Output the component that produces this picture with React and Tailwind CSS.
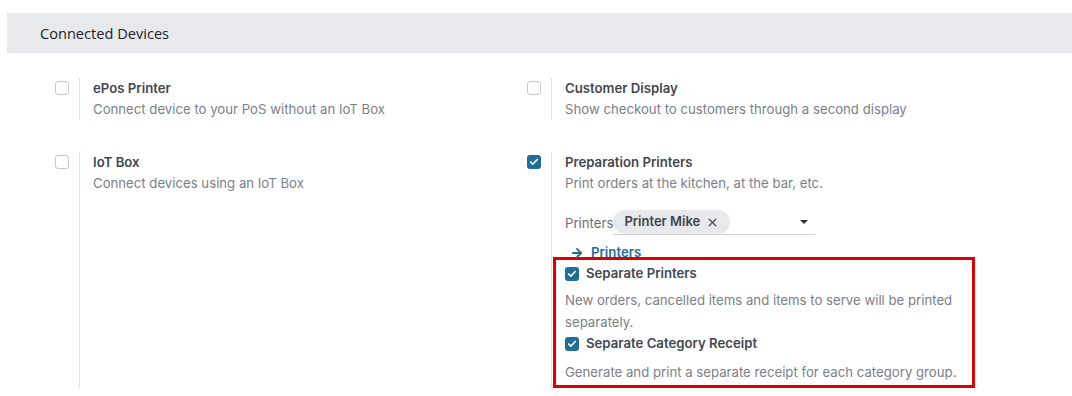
import React from 'react';
import { ArrowRight, Check, X } from 'lucide-react';

const Checkbox = ({ checked }) =>
  checked ? (
    <span className="flex items-center justify-center w-[14px] h-[14px] rounded-[3px] bg-[#1f6e99]">
      <Check size={10} strokeWidth={4} color="white" />
    </span>
  ) : (
    <span className="block w-[14px] h-[14px] rounded-[3px] border border-[#c4c8cd] bg-white" />
  );

const Setting = ({ title, desc, checked, children }) => (
  <div className="flex">
    <div className="w-[24px] shrink-0 pt-[3px]">
      <Checkbox checked={checked} />
    </div>
    <div className="border-l border-[#dee2e6] pl-[13px] flex-1">
      <div className="text-[13.2px] leading-[21px] font-semibold text-[#43484f]">{title}</div>
      <div className="text-[13.2px] leading-[21px] text-[#7b8088]">{desc}</div>
      {children}
    </div>
  </div>
);

export default function App() {
  return (
    <div className="w-[1072px] h-[396px] overflow-hidden bg-white font-['Inter',sans-serif]">
      <div className="mt-[13px] ml-[7px] h-10 bg-[#e7e9ed] flex items-center pl-[33px] pt-[1px]">
        <span className="text-[14.6px] font-medium text-[#1f2328] font-['Open_Sans',sans-serif]">Connected Devices</span>
      </div>

      <div className="grid grid-cols-[472px_1fr] pl-[55px] pt-[25px] gap-y-[32px]">
        <Setting title="ePos Printer" desc="Connect device to your PoS without an IoT Box" />
        <Setting title="Customer Display" desc="Show checkout to customers through a second display" />
        <Setting title="IoT Box" desc="Connect devices using an IoT Box" />
        <Setting title="Preparation Printers" desc="Print orders at the kitchen, at the bar, etc." checked>
          <div className="flex items-end mt-[16px] h-[25px]">
            <span className="text-[13.2px] text-[#6b7078] leading-[24px]">Printers</span>
            <div className="flex items-center justify-between w-[202px] h-[25px] border-b border-[#cfd3d7]">
              <span className="flex items-center gap-[6px] h-[24px] px-[11px] rounded-full bg-[#e7e9ed] text-[13px] font-semibold text-[#3f444b]">
                Printer Mike
                <X size={13} strokeWidth={2.5} className="text-[#555b62]" />
              </span>
              <span className="mr-[7px] w-0 h-0 border-l-[4px] border-r-[4px] border-t-[4px] border-l-transparent border-r-transparent border-t-[#333]" />
            </div>
          </div>
          <div className="flex items-center gap-[7px] pl-[5px] h-[20px] mt-[8px] text-[#1f6e99] font-semibold text-[13.2px]">
            <ArrowRight size={14} strokeWidth={3.2} />
            <span>Printers</span>
          </div>
          <div className="-ml-[12px] -mt-[6px] w-[422px] border-[3px] border-[#e00000] pl-[9px] pr-[8px] pt-[4px] pb-[2px]">
            <div className="flex items-center gap-[7px] h-[20px]">
              <Checkbox checked />
              <span className="text-[13.2px] font-semibold text-[#43484f]">Separate Printers</span>
            </div>
            <div className="mt-[5px] text-[13.2px] leading-[22px] text-[#7b8088]">
              New orders, cancelled items and items to serve will be printed separately.
            </div>
            <div className="flex items-center gap-[7px] h-[20px] mt-[1px]">
              <Checkbox checked />
              <span className="text-[13.2px] font-semibold text-[#43484f]">Separate Category Receipt</span>
            </div>
            <div className="mt-[7px] text-[13.2px] leading-[22px] text-[#7b8088]">
              Generate and print a separate receipt for each category group.
            </div>
          </div>
        </Setting>
      </div>
    </div>
  );
}
